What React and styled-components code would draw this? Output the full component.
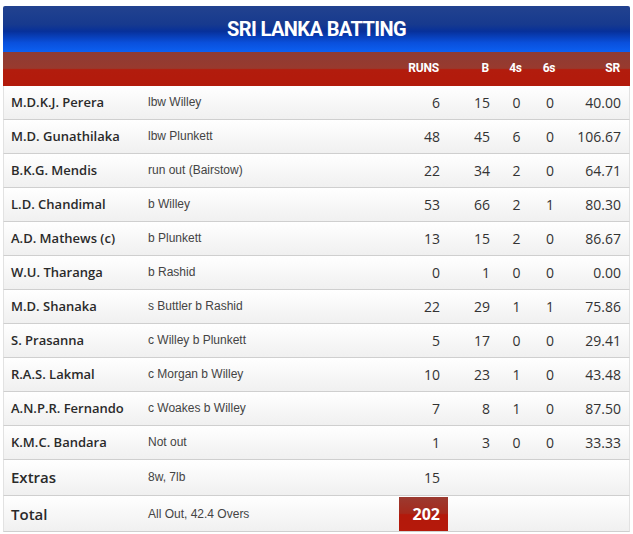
import styled, { createGlobalStyle } from 'styled-components';

const Global = createGlobalStyle`
  body {
    margin: 0;
    background: #fff;
    font-family: "Open Sans", sans-serif;
  }
`;

const batsmen = [
  ['M.D.K.J. Perera', 'lbw Willey', 6, 15, 0, 0, '40.00'],
  ['M.D. Gunathilaka', 'lbw Plunkett', 48, 45, 6, 0, '106.67'],
  ['B.K.G. Mendis', 'run out (Bairstow)', 22, 34, 2, 0, '64.71'],
  ['L.D. Chandimal', 'b Willey', 53, 66, 2, 1, '80.30'],
  ['A.D. Mathews (c)', 'b Plunkett', 13, 15, 2, 0, '86.67'],
  ['W.U. Tharanga', 'b Rashid', 0, 1, 0, 0, '0.00'],
  ['M.D. Shanaka', 's Buttler b Rashid', 22, 29, 1, 1, '75.86'],
  ['S. Prasanna', 'c Willey b Plunkett', 5, 17, 0, 0, '29.41'],
  ['R.A.S. Lakmal', 'c Morgan b Willey', 10, 23, 1, 0, '43.48'],
  ['A.N.P.R. Fernando', 'c Woakes b Willey', 7, 8, 1, 0, '87.50'],
  ['K.M.C. Bandara', 'Not out', 1, 3, 0, 0, '33.33'],
];

const cols = '141px 254px 49px 50px 37px 30px 64px';

const Card = styled.div`
  margin: 6px 3px 0 3px;
  width: 627px;
`;

const Title = styled.h2`
  margin: 0;
  height: 45px;
  display: flex;
  align-items: center;
  justify-content: center;
  border-radius: 2px 2px 0 0;
  background: linear-gradient(
    to bottom,
    #22428f 0%,
    #173a8e 40%,
    #07309a 55%,
    #0a50dc 80%,
    #0c60f2 100%
  );
  color: #fff;
  font-family: Roboto, sans-serif;
  font-weight: 700;
  font-size: 20px;
  letter-spacing: -0.6px;
  padding-bottom: 1px;
`;

const Row = styled.div`
  display: grid;
  grid-template-columns: ${cols};
  height: ${(p) => p.$h || 34}px;
  align-items: center;
  border-left: 1px solid #e2e2e2;
  border-right: 1px solid #e2e2e2;
  border-bottom: 1px solid #cfcfcf;
  box-sizing: border-box;
  padding-bottom: 1px;
  background: linear-gradient(to bottom, #fff 0%, #f6f6f6 60%, #f0f0f0 100%);
`;

const HeadRow = styled(Row)`
  border: none;
  padding-bottom: 3px;
  background: linear-gradient(
    to bottom,
    #8f3b33 0%,
    #983a2e 48%,
    #b21c0d 52%,
    #b21a0b 100%
  );
`;

const Cell = styled.div`
  text-align: ${(p) => p.$align || 'left'};
  padding: ${(p) =>
    p.$align === 'right' ? '0 8px 0 0' : p.$align === 'center' ? '0' : '0 0 0 7px'};
  white-space: nowrap;
`;

const HeadCell = styled(Cell)`
  color: #fff;
  font-family: Roboto, sans-serif;
  font-weight: 700;
  font-size: 12px;
  letter-spacing: -0.2px;
`;

const Name = styled(Cell)`
  color: #2a2a2a;
  font-size: ${(p) => (p.$big ? 15 : 13)}px;
  font-weight: 600;
`;

const Dismissal = styled(Cell)`
  color: #444;
  font-family: "Liberation Sans", Arial, sans-serif;
  font-size: 12px;
  padding-left: 3px;
`;

const Num = styled(Cell)`
  color: #333;
  font-size: 14px;
`;

const TotalBox = styled.div`
  height: 34px;
  align-self: stretch;
  display: flex;
  align-items: center;
  justify-content: flex-end;
  padding-right: 8px;
  margin-top: 1px;
  color: #fff;
  font-weight: 700;
  font-size: 16px;
  background: linear-gradient(to bottom, #9b3a30 0%, #a5291c 48%, #b3190b 52%, #b5190b 100%);
`;

export default function App() {
  return (
    <>
      <Global />
      <Card>
        <Title>SRI LANKA BATTING</Title>
        <HeadRow>
          <HeadCell />
          <HeadCell />
          <HeadCell $align="right">RUNS</HeadCell>
          <HeadCell $align="right">B</HeadCell>
          <HeadCell $align="center">4s</HeadCell>
          <HeadCell $align="center">6s</HeadCell>
          <HeadCell $align="right">SR</HeadCell>
        </HeadRow>
        {batsmen.map(([name, how, r, b, f, s, sr]) => (
          <Row key={name}>
            <Name>{name}</Name>
            <Dismissal>{how}</Dismissal>
            <Num $align="right">{r}</Num>
            <Num $align="right">{b}</Num>
            <Num $align="center">{f}</Num>
            <Num $align="center">{s}</Num>
            <Num $align="right">{sr}</Num>
          </Row>
        ))}
        <Row $h={36}>
          <Name $big>Extras</Name>
          <Dismissal>8w, 7lb</Dismissal>
          <Num $align="right">15</Num>
        </Row>
        <Row $h={36}>
          <Name $big>Total</Name>
          <Dismissal>All Out, 42.4 Overs</Dismissal>
          <TotalBox>202</TotalBox>
        </Row>
      </Card>
    </>
  );
}
